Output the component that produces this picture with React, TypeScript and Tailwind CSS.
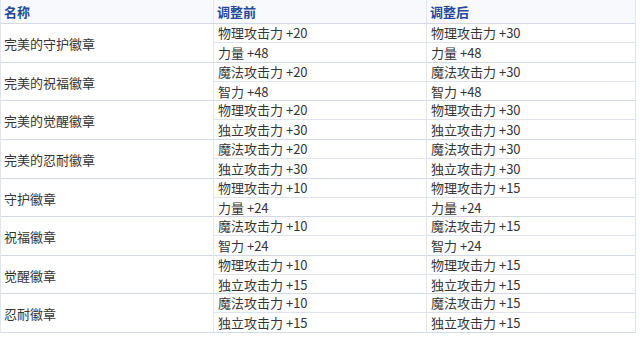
const rows = [
  { name: '完美的守护徽章', h: 'h-[39px]', before: ['物理攻击力 +20', '力量 +48'], after: ['物理攻击力 +30', '力量 +48'] },
  { name: '完美的祝福徽章', h: 'h-[38px]', before: ['魔法攻击力 +20', '智力 +48'], after: ['魔法攻击力 +30', '智力 +48'] },
  { name: '完美的觉醒徽章', h: 'h-[39px]', before: ['物理攻击力 +20', '独立攻击力 +30'], after: ['物理攻击力 +30', '独立攻击力 +30'] },
  { name: '完美的忍耐徽章', h: 'h-[39px]', before: ['魔法攻击力 +20', '独立攻击力 +30'], after: ['魔法攻击力 +30', '独立攻击力 +30'] },
  { name: '守护徽章', h: 'h-[38px]', before: ['物理攻击力 +10', '力量 +24'], after: ['物理攻击力 +15', '力量 +24'] },
  { name: '祝福徽章', h: 'h-[39px]', before: ['魔法攻击力 +10', '智力 +24'], after: ['魔法攻击力 +15', '智力 +24'] },
  { name: '觉醒徽章', h: 'h-[38px]', before: ['物理攻击力 +10', '独立攻击力 +15'], after: ['物理攻击力 +15', '独立攻击力 +15'] },
  { name: '忍耐徽章', h: 'h-[39px]', before: ['魔法攻击力 +10', '独立攻击力 +15'], after: ['魔法攻击力 +15', '独立攻击力 +15'] },
];

const font = { fontFamily: '"Noto Sans CJK SC", "Noto Sans", sans-serif' };

function Pair({ items, last }: { items: string[]; last?: boolean }) {
  return (
    <div className={`flex flex-col ${last ? '' : 'border-r border-[#e0e5ee]'}`}>
      <div className="h-[19px] shrink-0 pl-[4px] flex items-center border-b border-[#dfe3ec]">{items[0]}</div>
      <div className="flex-1 pl-[4px] flex items-center">{items[1]}</div>
    </div>
  );
}

export default function App() {
  return (
    <div className="w-[640px] h-[337px] bg-white overflow-hidden" style={font}>
      <div className="w-[636px] border-l border-r border-[#e0e5ee] text-[13px] text-[#353535]">
        {/* header */}
        <div className="grid grid-cols-[213px_213px_208px] h-[24px] bg-[#f7f9fc] border-b border-[#d3d9e5] font-bold text-[#27479a]">
          <div className="pl-[3px] flex items-center border-r border-[#e0e5ee]">名称</div>
          <div className="pl-[3px] flex items-center border-r border-[#e0e5ee]">调整前</div>
          <div className="pl-[3px] flex items-center">调整后</div>
        </div>
        {rows.map((r) => (
          <div key={r.name} className={`grid grid-cols-[213px_213px_208px] ${r.h} border-b border-[#d3d9e5]`}>
            <div className="pl-[3px] flex items-center border-r border-[#e0e5ee]">{r.name}</div>
            <Pair items={r.before} />
            <Pair items={r.after} last />
          </div>
        ))}
      </div>
    </div>
  );
}
